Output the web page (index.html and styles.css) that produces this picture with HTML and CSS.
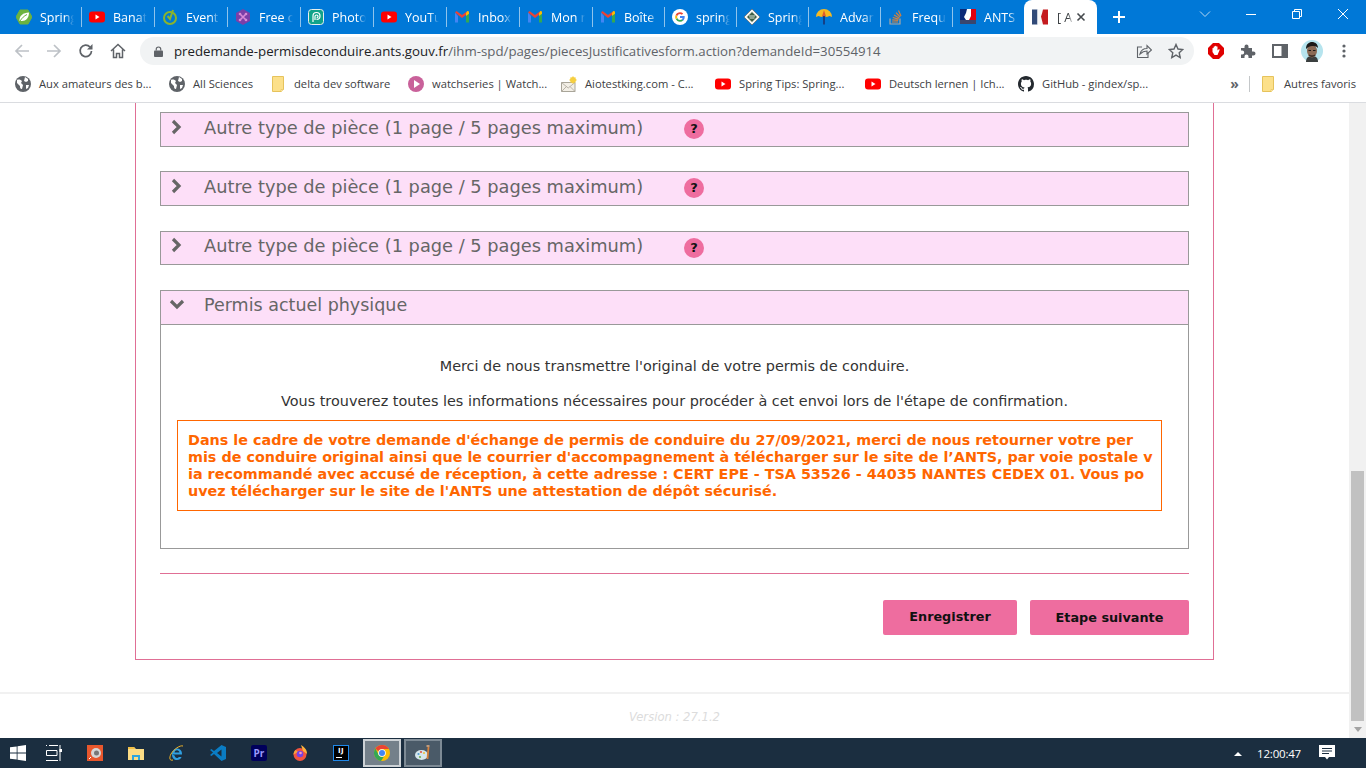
FILE: index.html
```html
<!DOCTYPE html>
<html lang="fr">
<head>
<meta charset="utf-8">
<title>Pièces justificatives</title>
<link rel="stylesheet" href="styles.css">
</head>
<body>
<svg class="sprite" xmlns="http://www.w3.org/2000/svg">
  <symbol id="i-spring" viewBox="0 0 16 16"><path d="M4 1h8l4 7-4 7H4L0 8z" fill="#6db33f" stroke="#6db33f" stroke-linejoin="round"/><path d="M3.500 12C3 7 7 3.500 13 3.500c0 5-3 8.500-7 8.500-1 0-2 0-2.500 0z" fill="#fff"/><path d="M4 12c2-3 4-5 7-6.500" stroke="#6db33f" fill="none"/></symbol>
  <symbol id="i-yt" viewBox="0 0 16 16"><rect x="0" y="2.500" width="16" height="11" rx="3" fill="#f00"/><path d="M6.500 5.500v5l4-2.500z" fill="#fff"/></symbol>
  <symbol id="i-event" viewBox="0 0 16 16"><circle cx="8" cy="9" r="6" fill="none" stroke="#8ab42d" stroke-width="2"/><path d="M5.500 7l2.500 3L11 1" fill="none" stroke="#8ab42d" stroke-width="2"/></symbol>
  <symbol id="i-free" viewBox="0 0 16 16"><path d="M8 0l7 4v8l-7 4-7-4V4z" fill="#7b3fa8"/><path d="M5 5l6 6M11 5l-6 6" stroke="#d98ad8" stroke-width="1.600"/><circle cx="5" cy="5" r="1.300" fill="#d98ad8"/><circle cx="11" cy="5" r="1.300" fill="#d98ad8"/><circle cx="5" cy="11" r="1.300" fill="#d98ad8"/><circle cx="11" cy="11" r="1.300" fill="#d98ad8"/></symbol>
  <symbol id="i-photo" viewBox="0 0 16 16"><rect x=".5" y=".5" width="15" height="15" rx="3" fill="#11a38a" stroke="#e7efee"/><path d="M5 13V7a3.500 3.500 0 1 1 3.500 3.500M7 11V7.500A1.500 1.500 0 1 1 8.500 9" fill="none" stroke="#fff" stroke-width="1.200"/></symbol>
  <symbol id="i-gmail" viewBox="0 0 16 16"><path d="M1 3.500v10h3V7z" fill="#4285f4"/><path d="M12 7v6.500h3v-10z" fill="#34a853"/><path d="M1 3.500L8 9l7-5.500-1.500-1.500L8 6 2.500 2z" fill="#ea4335"/><path d="M12 4.300V7l3-2.300V3.500c0-1-1-1.800-1.800-1.200z" fill="#fbbc04"/></symbol>
  <symbol id="i-google" viewBox="0 0 16 16"><circle cx="8" cy="8" r="8" fill="#fff"/><path d="M12.700 8.100c0-.4 0-.7-.1-1H8v1.900h2.600c-.1.600-.5 1.100-1 1.500l1.600 1.200c.9-.9 1.500-2.100 1.500-3.600z" fill="#4285f4"/><path d="M8 12.800c1.300 0 2.400-.4 3.200-1.200l-1.600-1.200c-.4.300-1 .5-1.600.5-1.200 0-2.300-.8-2.700-2L3.700 10.100C4.500 11.700 6.100 12.800 8 12.800z" fill="#34a853"/><path d="M5.300 8.900c-.2-.6-.2-1.200 0-1.800L3.700 5.900c-.7 1.300-.7 2.900 0 4.200z" fill="#fbbc04"/><path d="M8 5.100c.7 0 1.300.2 1.800.7l1.400-1.400C10.300 3.600 9.200 3.200 8 3.200c-1.900 0-3.500 1.100-4.300 2.700l1.600 1.200c.4-1.200 1.500-2 2.700-2z" fill="#ea4335"/></symbol>
  <symbol id="i-diamond" viewBox="0 0 16 16"><path d="M8 0l8 8-8 8-8-8z" fill="#f4f4f0" stroke="#555" stroke-width=".6"/><path d="M8 3l5 5-5 5-5-5z" fill="#3f5f45"/><path d="M5 7h6M5.500 9h5" stroke="#dfe8dc"/></symbol>
  <symbol id="i-umbrella" viewBox="0 0 16 16"><path d="M0 8a8 8 0 0 1 16 0l-2.500-1-2.700 1L8 7 5.200 8 2.500 7z" fill="#f5b921"/><path d="M8 1L6 7.500h4z" fill="#e05b2c"/><path d="M8 7v8.500" stroke="#1b2e6b" stroke-width="1.500"/></symbol>
  <symbol id="i-so" viewBox="0 0 16 16"><path d="M2 9.500v5.500h10V9.500" fill="none" stroke="#a9a7a4" stroke-width="1.200"/><path d="M4 13h6M4.200 10.800l6 .6M4.800 8.500l5.800 1.600M6 6l5.200 3M8 3.700l4.200 4.300M10.500 1.500l2.500 5.500" stroke="#d98036" stroke-width="1.200" fill="none"/></symbol>
  <symbol id="i-ants" viewBox="0 0 16 16"><rect width="16" height="11" fill="#fff"/><path d="M0 0h7L6 4 4 8l2 3H0z" fill="#0c2a78"/><path d="M11 0h5v11h-7l2-4z" fill="#e1000f"/><rect y="11" width="16" height="4" fill="#39466e"/></symbol>
  <symbol id="i-flag" viewBox="0 0 16 16"><path d="M0 .500h5.500v15H0z" fill="#314a78"/><path d="M5.500 .500H11l-1 4-1 3 1 4 1 4H5.500z" fill="#f7f7f7"/><path d="M11 .500h5v15h-5l-1-4-1-4 1-3z" fill="#c41a1e"/></symbol>
  <symbol id="i-globe" viewBox="0 0 16 16"><circle cx="8" cy="8" r="8" fill="#5f6368"/><path d="M2 4c2-1 4 0 5 1l-1 2 2 2-1 4c-2 0-2-2-2-3L2 7zM10 1l3 2v2l-2 1-2-1zM11 9h3l-1 3-2 1z" fill="#fff"/></symbol>
  <symbol id="i-folder" viewBox="0 0 16 16"><path d="M2.500 .500h11v13l-2 2h-9z" fill="#fce08a" stroke="#e6c35c"/><path d="M11 16v-2.500h2.500" fill="#fff2c2" stroke="#e6c35c" stroke-width=".7"/></symbol>
  <symbol id="i-play" viewBox="0 0 16 16"><circle cx="8" cy="8" r="8" fill="#c9619a"/><path d="M6 4l6 4-6 4z" fill="#fff"/></symbol>
  <symbol id="i-mail" viewBox="0 0 16 16"><path d="M.500 6.500h13.500v9H.500z" fill="#f3efe6" stroke="#a9a599"/><path d="M.500 6.500L7.200 12 14 6.500M.5 15.500l5-5M14 15.500l-5-5" fill="none" stroke="#a9a599" stroke-width=".8"/><circle cx="12" cy="4" r="3" fill="#f6cf3f"/><path d="M12 0v8M8 4h8M9.500 1.500l5 5M14.500 1.500l-5 5" stroke="#f6cf3f" stroke-width=".7"/></symbol>
  <symbol id="i-github" viewBox="0 0 16 16"><path fill="#24292f" d="M8 0C3.580 0 0 3.580 0 8c0 3.540 2.290 6.530 5.470 7.590.4.070.55-.17.55-.38 0-.19-.01-.82-.01-1.490-2.010.37-2.530-.49-2.690-.94-.09-.23-.48-.94-.82-1.130-.28-.15-.68-.52-.01-.53.630-.01 1.080.58 1.230.82.720 1.210 1.870.87 2.330.66.070-.52.280-.87.510-1.070-1.780-.2-3.640-.89-3.640-3.950 0-.87.310-1.590.82-2.150-.08-.2-.36-1.020.08-2.120 0 0 .67-.21 2.200.82.640-.18 1.320-.27 2-.27s1.360.09 2 .27c1.530-1.040 2.200-.82 2.200-.82.440 1.100.16 1.920.08 2.120.51.560.82 1.270.82 2.150 0 3.070-1.870 3.750-3.650 3.950.29.250.54.730.54 1.480 0 1.070-.01 1.930-.01 2.200 0 .21.150.46.550.38A8.013 8.013 0 0 0 16 8c0-4.420-3.580-8-8-8z"/></symbol>
  <symbol id="i-win" viewBox="0 0 16 16"><path d="M0 2.300l6.700-.9v6.200H0zM7.500 1.300L16 0v7.600H7.500zM0 8.400h6.700v6.200L0 13.700zM7.500 8.400H16V16l-8.500-1.200z" fill="#fff"/></symbol>
  <symbol id="i-taskview" viewBox="0 0 16 16"><path d="M.5 0v1M3 .500h9M.5 5.500h10.500v5H.5zM0 15.500h12M14 0v16M15 5h1" stroke="#fff" fill="none"/><rect x="13.500" y="4" width="2.500" height="3" fill="#fff"/></symbol>
  <symbol id="i-cam" viewBox="0 0 16 16"><rect width="16" height="16" fill="#e8572d"/><circle cx="9" cy="8" r="5" fill="#d6d6d6"/><circle cx="9.500" cy="8" r="2.500" fill="#777"/><path d="M2 14l2-2" stroke="#fff"/></symbol>
  <symbol id="i-explorer" viewBox="0 0 16 16"><path d="M0 2h6l2 2h8v11H0z" fill="#fbdc85"/><path d="M0 2h6l1 2H0z" fill="#f2bf45"/><path d="M4 15v-5h8v5H10v-3H6v3z" fill="#2ca5e0"/></symbol>
  <symbol id="i-ie" viewBox="0 0 16 16"><path d="M3 9.500h10c.3-3.500-2-6-5-6s-5 2.500-5 6 2 5.500 5 5.500c2.200 0 3.800-1 4.600-3H9.800c-.5.800-1 1-1.800 1-1.300 0-2.200-1-2.400-2.500zM5.600 7.500c.2-1.300 1.200-2.200 2.400-2.200s2.300 1 2.400 2.200z" fill="#2f9fe0"/><path d="M14 1C11 0 5 4 2 9c-2 4-1.500 7 2 6" fill="none" stroke="#f0b429" stroke-width="1"/></symbol>
  <symbol id="i-vscode" viewBox="0 0 16 16"><path d="M11.500 0L16 2v12l-4.500 2L4 9l-2.500 2L0 10l3-2.500L0 5l1.500-1L4 6z" fill="#0a7cc4"/><path d="M11.500 4.500L7 8l4.500 3.500z" fill="#1b2e40"/></symbol>
  <symbol id="i-firefox" viewBox="0 0 16 16"><circle cx="8" cy="9.500" r="6.500" fill="#f2533f"/><path d="M9 0c3 2 6 4 6 9l-4-3z" fill="#ffb13b"/><path d="M1.500 9.500c0-2 1-3.500 2-4.500l3 2z" fill="#f9a13a"/><circle cx="8" cy="9" r="3.300" fill="#7542e5"/><circle cx="8.500" cy="8" r="1.300" fill="#ff9bb2"/></symbol>
  <symbol id="i-chrome" viewBox="0 0 16 16"><circle cx="8" cy="8" r="8" fill="#fbbc04"/><path d="M8 0a8 8 0 0 1 6.930 4H8a4 4 0 0 0-3.600 2.200L1.400 3.500A8 8 0 0 1 8 0z" fill="#ea4335"/><path d="M1.400 3.500l3.300 6.500A4 4 0 0 0 10 11.500L7 16A8 8 0 0 1 1.400 3.500z" fill="#34a853"/><circle cx="8" cy="8" r="3.800" fill="#fff"/><circle cx="8" cy="8" r="3" fill="#4285f4"/></symbol>
  <symbol id="i-paint" viewBox="0 0 16 16"><ellipse cx="6.500" cy="10" rx="6.500" ry="5" fill="#d6e6ec"/><circle cx="3.500" cy="9" r="1.100" fill="#4f9bd0"/><circle cx="6" cy="7" r="1.100" fill="#e0574a"/><circle cx="9" cy="8" r="1.100" fill="#f0c040"/><circle cx="5" cy="12" r="1.100" fill="#6cb04a"/><path d="M12.500 14l1-12" stroke="#d9813a" stroke-width="1.800"/><path d="M11.500 1h3" stroke="#e8b080" stroke-width="1.500"/></symbol>
</svg>

<div class="window">
  <div class="tabstrip">
    <div class="tab"><svg class="fav"><use href="#i-spring"/></svg><span class="tab-title">Spring</span></div>
    <div class="tab"><svg class="fav"><use href="#i-yt"/></svg><span class="tab-title">Banat</span></div>
    <div class="tab"><svg class="fav"><use href="#i-event"/></svg><span class="tab-title">Event</span></div>
    <div class="tab"><svg class="fav"><use href="#i-free"/></svg><span class="tab-title">Free o</span></div>
    <div class="tab"><svg class="fav"><use href="#i-photo"/></svg><span class="tab-title">Photo</span></div>
    <div class="tab"><svg class="fav"><use href="#i-yt"/></svg><span class="tab-title">YouTu</span></div>
    <div class="tab"><svg class="fav"><use href="#i-gmail"/></svg><span class="tab-title">Inbox</span></div>
    <div class="tab"><svg class="fav"><use href="#i-gmail"/></svg><span class="tab-title">Mon n</span></div>
    <div class="tab narrow"><svg class="fav"><use href="#i-gmail"/></svg><span class="tab-title">Boîte</span></div>
    <div class="tab narrow"><svg class="fav"><use href="#i-google"/></svg><span class="tab-title">spring</span></div>
    <div class="tab narrow"><svg class="fav"><use href="#i-diamond"/></svg><span class="tab-title">Spring</span></div>
    <div class="tab narrow"><svg class="fav"><use href="#i-umbrella"/></svg><span class="tab-title">Advan</span></div>
    <div class="tab narrow"><svg class="fav"><use href="#i-so"/></svg><span class="tab-title">Frequ</span></div>
    <div class="tab narrow last"><svg class="fav"><use href="#i-ants"/></svg><span class="tab-title">ANTS</span></div>
    <div class="tab-active">
      <svg class="fav"><use href="#i-flag"/></svg>
      <span class="tab-title dark">[ A</span>
      <svg class="tab-close" viewBox="0 0 10 10"><path d="M1.500 1.500l7 7M8.500 1.500l-7 7" stroke="#45494d" stroke-width="1.600"/></svg>
    </div>
    <svg class="new-tab" viewBox="0 0 14 14"><path d="M7 1v12M1 7h12" stroke="#fff" stroke-width="2"/></svg>
    <div class="win-controls">
      <svg class="ctl" viewBox="0 0 12 12"><path d="M1 3.500l5 5 5-5" fill="none" stroke="#b9d8f2" stroke-width="1"/></svg>
      <svg class="ctl" viewBox="0 0 12 12"><path d="M1 6.500h10" stroke="#fff" stroke-width="1"/></svg>
      <svg class="ctl" viewBox="0 0 12 12"><path d="M1.500 3.500h7v7h-7zM3.500 3.500v-2h7v7h-2" fill="none" stroke="#fff" stroke-width="1"/></svg>
      <svg class="ctl" viewBox="0 0 12 12"><path d="M1 1l10 10M11 1L1 11" stroke="#fff" stroke-width="1"/></svg>
    </div>
  </div>

  <div class="toolbar">
    <svg class="tool" viewBox="0 0 16 16"><path d="M15 8H2M8 2L2 8l6 6" fill="none" stroke="#bdc1c6" stroke-width="1.700"/></svg>
    <svg class="tool" viewBox="0 0 16 16"><path d="M1 8h13M8 2l6 6-6 6" fill="none" stroke="#bdc1c6" stroke-width="1.700"/></svg>
    <svg class="tool" viewBox="0 0 16 16"><path d="M13.500 8A5.700 5.700 0 1 1 12 4" fill="none" stroke="#5f6368" stroke-width="1.700"/><path d="M14.500 1v5.500H9z" fill="#5f6368"/></svg>
    <svg class="tool" viewBox="0 0 16 16"><path d="M1 8l7-6.500L15 8M3.500 6.500v8h3v-4h3v4h3v-8" fill="none" stroke="#5f6368" stroke-width="1.500"/></svg>
    <div class="omnibox">
      <svg class="lock" viewBox="0 0 10 12"><path d="M2.500 5V3.500a2.500 2.500 0 0 1 5 0V5" fill="none" stroke="#5f6368" stroke-width="1.300"/><rect y="5" width="10" height="7" rx="1" fill="#5f6368"/></svg>
      <div class="url"><span class="host">predemande-permisdeconduire.ants.gouv.fr</span>/ihm-spd/pages/piecesJustificativesform.action?demandeId=30554914</div>
      <svg class="omni-icon" viewBox="0 0 16 16"><path d="M6 4H1.500v10.500H12V10" fill="none" stroke="#5f6368" stroke-width="1.100"/><path d="M4 11c1-4 4-5.500 7-5.500V2.500l4.500 4.500L11 11V8c-3 0-5 1-7 3z" fill="none" stroke="#5f6368" stroke-width="1.100"/></svg>
      <svg class="omni-icon" viewBox="0 0 16 16"><path d="M8 1.500l2 4.500 4.800.5-3.600 3.200 1 4.800L8 12.100l-4.200 2.400 1-4.800L1.200 6.500 6 6z" fill="none" stroke="#5f6368" stroke-width="1.400"/></svg>
    </div>
    <div class="ext-icons">
      <svg class="ext" viewBox="0 0 16 16"><path d="M5 0h6l5 5v6l-5 5H5l-5-5V5z" fill="#e00000"/><path d="M4.500 9V5.500c0-1 1.200-1 1.200 0V4c0-1 1.300-1 1.300 0V3.500c0-1 1.300-1 1.300 0V4c0-1 1.200-1 1.200 0v3.500l1-1c.7-.7 1.500 0 1 .7L9.500 12H6.500z" fill="#fff"/></svg>
      <svg class="ext" viewBox="0 0 16 16"><path d="M1 5h3.500V3.500a2 2 0 0 1 4 0V5H12v3.500h1.500a2 2 0 0 1 0 4H12V15H8.500v-1.500a2 2 0 0 0-4 0V15H1v-3.500h1.200a2 2 0 0 0 0-4H1z" fill="#5f6368"/></svg>
      <svg class="ext" viewBox="0 0 16 16"><path d="M1 2h14v12H1z" fill="none" stroke="#5f6368" stroke-width="2"/><rect x="9.500" y="2" width="5.500" height="12" fill="#5f6368"/></svg>
      <svg class="avatar" viewBox="0 0 22 22"><circle cx="11" cy="11" r="11" fill="#b6e4ee"/><path d="M5 22c0-4 2-6 6-6s6 2 6 6z" fill="#3a3f3f"/><ellipse cx="11" cy="11" rx="5" ry="6.500" fill="#8a6a55"/><path d="M5 9c0-5 3-7 6-7s6 2 6 6c-2-2-4-2-6-2-2 0-4 1-6 3z" fill="#1d1a18"/><path d="M7.500 10.500h2.500M12 10.500h2.500" stroke="#1d1a18" stroke-width="1.200"/><path d="M8 15c2 1.500 4 1.500 6 0" stroke="#3a2c25" stroke-width="1.500" fill="none"/></svg>
      <svg class="ext" viewBox="0 0 16 16"><circle cx="8" cy="3" r="1.600" fill="#5f6368"/><circle cx="8" cy="8" r="1.600" fill="#5f6368"/><circle cx="8" cy="13" r="1.600" fill="#5f6368"/></svg>
    </div>
  </div>

  <div class="bookmarks">
    <div class="bm b1"><svg class="fav"><use href="#i-globe"/></svg><span>Aux amateurs des b...</span></div>
    <div class="bm b2"><svg class="fav"><use href="#i-globe"/></svg><span>All Sciences</span></div>
    <div class="bm b3"><svg class="fav"><use href="#i-folder"/></svg><span>delta dev software</span></div>
    <div class="bm b4"><svg class="fav"><use href="#i-play"/></svg><span>watchseries | Watch...</span></div>
    <div class="bm b5"><svg class="fav"><use href="#i-mail"/></svg><span>Aiotestking.com - C...</span></div>
    <div class="bm b6"><svg class="fav"><use href="#i-yt"/></svg><span>Spring Tips: Spring...</span></div>
    <div class="bm b7"><svg class="fav"><use href="#i-yt"/></svg><span>Deutsch lernen | Ich...</span></div>
    <div class="bm b8"><svg class="fav"><use href="#i-github"/></svg><span>GitHub - gindex/sp...</span></div>
    <div class="bm-end">
      <span class="bm-more">»</span>
      <span class="bm-sep"></span>
      <div class="bm"><svg class="fav"><use href="#i-folder"/></svg><span>Autres favoris</span></div>
    </div>
  </div>

  <div class="viewport">
    <div class="page">
      <main class="panel">
        <section class="acc">
          <svg class="chev" viewBox="0 0 12 16"><path d="M2 2l6 6-6 6" fill="none" stroke="#666" stroke-width="3.200"/></svg>
          <h2 class="acc-title">Autre type de pièce (1 page / 5 pages maximum)</h2>
          <span class="help">?</span>
        </section>
        <section class="acc">
          <svg class="chev" viewBox="0 0 12 16"><path d="M2 2l6 6-6 6" fill="none" stroke="#666" stroke-width="3.200"/></svg>
          <h2 class="acc-title">Autre type de pièce (1 page / 5 pages maximum)</h2>
          <span class="help">?</span>
        </section>
        <section class="acc">
          <svg class="chev" viewBox="0 0 12 16"><path d="M2 2l6 6-6 6" fill="none" stroke="#666" stroke-width="3.200"/></svg>
          <h2 class="acc-title">Autre type de pièce (1 page / 5 pages maximum)</h2>
          <span class="help">?</span>
        </section>
        <section class="acc open">
          <svg class="chev down" viewBox="0 0 16 12"><path d="M2 2l6 6 6-6" fill="none" stroke="#666" stroke-width="3.200"/></svg>
          <h2 class="acc-title">Permis actuel physique</h2>
        </section>
        <section class="acc-body">
          <p class="line first">Merci de nous transmettre l'original de votre permis de conduire.</p>
          <p class="line second">Vous trouverez toutes les informations nécessaires pour procéder à cet envoi lors de l'étape de confirmation.</p>
          <div class="warning">Dans le cadre de votre demande d'échange de permis de conduire du 27/09/2021, merci de nous retourner votre per<br>mis de conduire original ainsi que le courrier d'accompagnement à télécharger sur le site de l’ANTS, par voie postale v<br>ia recommandé avec accusé de réception, à cette adresse : CERT EPE - TSA 53526 - 44035 NANTES CEDEX 01. Vous po<br>uvez télécharger sur le site de l'ANTS une attestation de dépôt sécurisé.</div>
        </section>
        <hr class="rule">
        <div class="actions">
          <button class="btn save" type="button">Enregistrer</button>
          <button class="btn next" type="button">Etape suivante</button>
        </div>
      </main>
      <footer class="foot">Version : 27.1.2</footer>
    </div>
    <div class="scrollbar">
      <div class="arrow-up"></div>
      <div class="thumb"></div>
      <div class="arrow-down"></div>
    </div>
  </div>

  <div class="taskbar">
    <div class="task start"><svg class="fav"><use href="#i-win"/></svg></div>
    <div class="task"><svg class="fav"><use href="#i-taskview"/></svg></div>
    <div class="task"><svg class="fav"><use href="#i-cam"/></svg></div>
    <div class="task"><svg class="fav"><use href="#i-explorer"/></svg></div>
    <div class="task"><svg class="fav"><use href="#i-ie"/></svg></div>
    <div class="task"><svg class="fav"><use href="#i-vscode"/></svg></div>
    <div class="task"><span class="pr">Pr</span></div>
    <div class="task"><svg class="fav"><use href="#i-firefox"/></svg></div>
    <div class="task"><span class="ij">IJ</span></div>
    <div class="task active chrome"><svg class="fav"><use href="#i-chrome"/></svg></div>
    <div class="task active paint"><svg class="fav"><use href="#i-paint"/></svg></div>
    <div class="tray">
      <svg class="tray-up" viewBox="0 0 8 5"><path d="M0 5l4-4 4 4z" fill="#fff"/></svg>
      <span class="clock">12:00:47</span>
      <svg class="notif" viewBox="0 0 16 16"><path d="M0 0h16v12h-6l-2 2.500L6 12H0z" fill="#fff"/><path d="M3 3.500h10M3 6h10M3 8.500h7" stroke="#1b2e40"/></svg>
    </div>
  </div>
</div>
</body>
</html>
```

FILE: styles.css
```css
* { box-sizing: border-box; }
html, body { margin: 0; height: 100%; overflow: hidden; background: #fff; }
body { font-family: "DejaVu Sans", sans-serif; }
.sprite { display: none; }

.window { display: flex; flex-direction: column; width: 1366px; height: 768px; }

/* tab strip */
.tabstrip { display: flex; align-items: center; height: 34px; flex: none; background: #0078d7; padding-left: 9px; font-family: "Open Sans", sans-serif; }
.tab { display: flex; align-items: center; width: 73px; height: 20px; padding-left: 7px; border-right: 1px solid #8fc3ec; color: #fff; flex: none; }
.tab.narrow { width: 72px; }
.tab.last { width: 71px; border-right: 0; }
.fav { width: 16px; height: 16px; flex: none; display: block; }
.tab-title { margin-left: 8px; width: 34px; font-size: 12.500px; white-space: nowrap; overflow: hidden; -webkit-mask-image: linear-gradient(90deg, #000 72%, transparent); mask-image: linear-gradient(90deg, #000 72%, transparent); }
.tab-title.dark { color: #3c4043; width: 16px; margin-left: 9px; }
.tab-active { display: flex; align-items: center; width: 73px; height: 34px; padding-left: 8px; background: #fff; border-radius: 8px 8px 0 0; flex: none; }
.tab-close { width: 10px; height: 10px; margin-left: 3px; flex: none; }
.new-tab { width: 14px; height: 14px; margin-left: 15px; flex: none; }
.win-controls { display: flex; margin-left: auto; align-items: center; height: 34px; padding-bottom: 6px; }
.ctl { width: 12px; height: 12px; margin: 0 17px; flex: none; }

/* toolbar */
.toolbar { display: flex; align-items: center; height: 34px; flex: none; background: #fff; padding-left: 14px; }
.tool { width: 16px; height: 16px; margin-right: 16px; flex: none; }
.omnibox { display: flex; align-items: center; width: 1054px; height: 28px; margin-left: -2px; background: #f1f3f4; border-radius: 14px; padding: 0 10px 0 14px; flex: none; font-family: "Open Sans", sans-serif; }
.lock { width: 9px; height: 11px; margin-right: 11px; flex: none; }
.url { flex: 1; font-size: 13.250px; color: #5f6368; white-space: nowrap; }
.host { color: #202124; }
.omni-icon { width: 16px; height: 16px; margin-left: 16px; flex: none; }
.ext-icons { display: flex; align-items: center; margin-left: 14px; }
.ext { width: 16px; height: 16px; margin-right: 16px; flex: none; }
.avatar { width: 22px; height: 22px; margin: 0 13px 0 -3px; flex: none; }

/* bookmarks */
.bookmarks { display: flex; align-items: center; flex: none; padding: 0 10px 3px 15px; font-family: "Open Sans", sans-serif; font-size: 11.200px; color: #3c4043; border-bottom: 1px solid #dadce0; height: 35px; }
.bm { display: flex; align-items: center; gap: 8px; flex: none; white-space: nowrap; }
.b1 { width: 154px; } .b2 { width: 103px; } .b3 { width: 138px; margin-left: -2px; } .b4 { width: 153px; }
.b5 { width: 154px; } .b6 { width: 150px; } .b7 { width: 153px; } .b8 { width: 150px; }
.bm-end { display: flex; align-items: center; margin-left: auto; }
.bm-more { font-size: 14px; font-weight: 700; color: #5f6368; margin-right: 10px; }
.bm-sep { width: 1px; height: 16px; background: #c4c7c9; margin-right: 10px; }

/* page */
.viewport { flex: 1; display: flex; min-height: 0; }
.page { flex: 1; min-width: 0; display: flex; flex-direction: column; }
.panel { width: 1079px; height: 557px; flex: none; margin-left: 135px; padding: 9px 24px 0; border: 1px solid #e06f95; border-top: 0; }
.acc { display: flex; align-items: center; height: 34.670px; margin-bottom: 24.670px; padding-left: 10px; background: #fddff8; border: 1px solid #999; color: #666; }
.acc.open { margin-bottom: 0; }
.chev { width: 12px; height: 16px; flex: none; margin-top: -5px; }
.chev.down { width: 16px; height: 12px; margin: -5px -2px 0 -2px; }
.acc-title { margin: -3.330px 0 0 21px; font-size: 17.800px; font-weight: 400; line-height: 22px; }
.acc.open .acc-title { font-size: 17.500px; margin-top: -4.400px; }
.help { width: 20px; height: 20px; margin-top: -.660px; margin-left: 41px; border-radius: 50%; background: #ee6d9f; color: #111; font-size: 13px; font-weight: 700; line-height: 20px; text-align: center; flex: none; }
.acc-body { height: 224px; padding: 0 16px; border: 1px solid #999; border-top: 0; font-size: 14.400px; color: #333; text-align: center; }
.line { margin: 0; line-height: 17px; }
.line.first { padding-top: 33px; }
.line.second { padding-top: 18px; }
.warning { margin-top: 10px; width: 985px; height: 91px; padding: 11px 10px 0; border: 1px solid #ff6600; color: #ff6600; font-size: 14.350px; font-weight: 700; line-height: 17px; text-align: left; white-space: nowrap; }
.rule { height: 1px; margin: 24px 0 0; border: 0; background: #e06f95; }
.actions { display: flex; justify-content: flex-end; gap: 13px; padding-top: 26px; }
.btn { height: 35px; border: 0; border-radius: 2px; background: #ee6d9f; color: #111; font: 700 12.800px "DejaVu Sans", sans-serif; }
.btn.save { width: 134px; padding-bottom: 3px; }
.btn.next { width: 159px; }
.foot { margin-top: 32px; height: 46px; border-top: 2px solid #f1f1f1; font-size: 11.600px; font-style: italic; color: #dcdcdc; text-align: center; padding-top: 16px; }

/* scrollbar */
.scrollbar { width: 17px; flex: none; background: #f1f1f1; display: flex; flex-direction: column; }
.arrow-up { height: 17px; flex: none; }
.thumb { margin: 351px 2px 0 2px; width: 13px; height: 250px; background: #c1c1c1; flex: none; }
.arrow-down { width: 0; height: 0; margin: 6px auto 0; border: 4px solid transparent; border-top: 5px solid #a3a3a3; border-bottom: 0; }

/* taskbar */
.taskbar { display: flex; align-items: center; height: 30px; flex: none; background: #1b2e40; }
.task { display: flex; align-items: center; width: 41px; height: 30px; padding-left: 12px; flex: none; }
.task.start { width: 34px; padding-left: 10px; }
.task.active { width: 38px; height: 28px; padding-left: 9px; border: 2px solid #cdd2d6; background: #74808a; margin-left: 1px; margin-right: 3px; }
.task.paint { background: #4a5a68; border-color: #7d8a95; margin: 0; }
.pr { width: 16px; height: 16px; background: #00005b; border-radius: 2px; color: #9a9aff; font: 700 10px/16px "Open Sans", sans-serif; text-align: center; }
.ij { width: 16px; height: 16px; padding-top: 1px; background: #000; border: 1px solid #1f88ea; color: #fff; font: 700 7px/8px "DejaVu Sans", sans-serif; text-align: center; letter-spacing: .5px; }
.ij::after { content: ""; display: block; width: 6px; height: 1px; margin: 2px 0 0 2px; background: #fff; }
.tray { display: flex; align-items: center; margin-left: auto; padding-right: 31px; }
.tray-up { width: 8px; height: 5px; margin-right: 15px; }
.clock { font: 11.500px "Open Sans", sans-serif; letter-spacing: -.2px; color: #fff; margin-right: 18px; }
.notif { width: 16px; height: 16px; }
```
